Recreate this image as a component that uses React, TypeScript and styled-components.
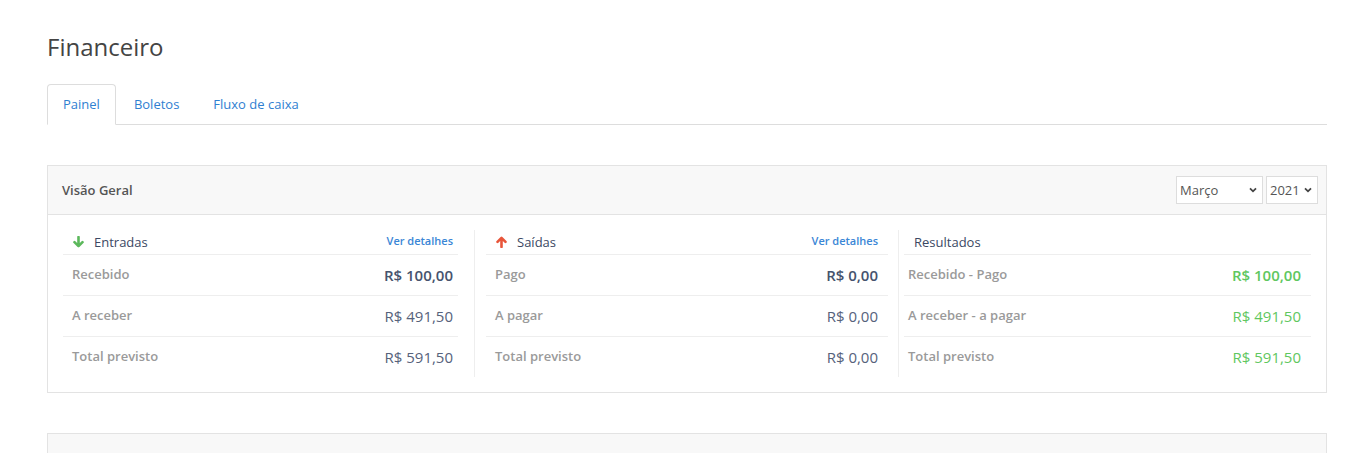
import styled, { createGlobalStyle } from "styled-components";

const GlobalStyle = createGlobalStyle`
  * { box-sizing: border-box; }
  body {
    margin: 0;
    background: #fff;
    font-family: "Open Sans", "Liberation Sans", sans-serif;
    color: #555;
  }
`;

const Page = styled.div`
  padding: 28px 39px 0 47px;
`;

const Title = styled.h1`
  margin: 0 0 18px;
  font-size: 24px;
  font-weight: 400;
  line-height: 38px;
  color: #444;
`;

const Tabs = styled.ul`
  display: flex;
  list-style: none;
  margin: 0 0 40px;
  padding: 0;
  border-bottom: 1px solid #ddd;
`;

const Tab = styled.li<{ active?: boolean }>`
  margin: 0 2px -1px 0;
  padding: 10px 15px;
  font-size: 13px;
  line-height: 19px;
  color: #2f80d1;
  border: 1px solid ${(p) => (p.active ? "#ddd" : "transparent")};
  border-bottom-color: ${(p) => (p.active ? "#fff" : "transparent")};
  border-radius: 4px 4px 0 0;
  background: ${(p) => (p.active ? "#fff" : "transparent")};
`;

const Panel = styled.section`
  border: 1px solid #e3e3e3;
  margin-bottom: 40px;
`;

const PanelHeader = styled.div`
  display: flex;
  align-items: center;
  justify-content: space-between;
  height: 49px;
  padding: 0 8px 0 14px;
  background: #f8f8f8;
  border-bottom: 1px solid #e3e3e3;
`;

const PanelTitle = styled.span`
  font-size: 13px;
  font-weight: 600;
  color: #555;
`;

const Selects = styled.div`
  display: flex;
  gap: 3px;
`;

const SelectBox = styled.div<{ w: number }>`
  position: relative;
  width: ${(p) => p.w}px;
  height: 28px;
`;

const Select = styled.select`
  appearance: none;
  width: 100%;
  height: 100%;
  padding: 0 0 0 3px;
  border: 1px solid #ddd;
  background: #fff;
  font-family: inherit;
  font-size: 13px;
  color: #555;
`;

const Chevron = styled.svg`
  position: absolute;
  right: 6px;
  top: 11px;
  pointer-events: none;
`;

const PanelBody = styled.div`
  display: flex;
  padding: 15px 0;
`;

const ColHeader = styled.div`
  display: flex;
  align-items: center;
  justify-content: space-between;
  height: 25px;
  padding: 0 5px 0 10px;
  border-bottom: 1px solid #eee;
`;

const Row = styled.div`
  display: flex;
  align-items: center;
  justify-content: space-between;
  height: 41px;
  padding: 0 5px 0 9px;
  border-bottom: 1px solid #eee;
  &:last-child { border-bottom: none; height: 40px; }
`;

const Column = styled.div<{ pad: string; divider?: boolean; w?: number; inset?: string; rowStart?: string }>`
  ${(p) => (p.w ? `width: ${p.w}px; flex: none;` : "flex: 1;")}
  padding: ${(p) => p.pad};
  border-left: ${(p) => (p.divider ? "1px solid #eee" : "none")};
  ${(p) =>
    p.inset
      ? `
    & ${ColHeader} { padding-right: ${p.inset}; }
    & ${Row} { padding-right: ${p.inset}; }
  `
      : ""}
  ${(p) => (p.rowStart ? `& ${Row} { padding-left: ${p.rowStart}; }` : "")}
`;

const ColTitle = styled.span`
  display: flex;
  align-items: center;
  gap: 10px;
  font-size: 13px;
  color: #3b4863;
  line-height: 24px;
`;

const Details = styled.a`
  font-size: 11px;
  font-weight: 600;
  color: #3a86d6;
  margin-top: -4px;
  text-decoration: none;
`;

const Label = styled.span`
  font-size: 13px;
  font-weight: 600;
  color: #9a9a9a;
  margin-top: -2px;
`;

const Value = styled.span<{ strong?: boolean; tone?: "green" }>`
  font-size: 15px;
  font-weight: ${(p) => (p.strong ? 600 : 400)};
  color: ${(p) => (p.tone === "green" ? "#5fc760" : p.strong ? "#46536e" : "#56627b")};
`;

const EmptyPanel = styled.div`
  height: 30px;
  border: 1px solid #e3e3e3;
  border-bottom: none;
  background: #f8f8f8;
`;

const Arrow = ({ up, color }: { up?: boolean; color: string }) => (
  <svg width="11" height="12" viewBox="0 0 11 12" style={{ transform: up ? "rotate(180deg)" : undefined }}>
    <path d="M5.5 1v9M1.5 6.2l4 4 4-4" fill="none" stroke={color} strokeWidth="2.6" strokeLinecap="round" strokeLinejoin="round" />
  </svg>
);

const Down = () => (
  <Chevron width="8" height="6" viewBox="0 0 8 6">
    <path d="M1 1.3l3 3 3-3" fill="none" stroke="#444" strokeWidth="1.8" />
  </Chevron>
);

type Item = { label: string; value: string };

const Block = ({ items, green }: { items: Item[]; green?: boolean }) => (
  <>
    {items.map((it, i) => (
      <Row key={it.label}>
        <Label>{it.label}</Label>
        <Value strong={i === 0} tone={green ? "green" : undefined}>{it.value}</Value>
      </Row>
    ))}
  </>
);

export default function App() {
  return (
    <Page>
      <GlobalStyle />
      <Title>Financeiro</Title>
      <Tabs>
        <Tab active>Painel</Tab>
        <Tab>Boletos</Tab>
        <Tab>Fluxo de caixa</Tab>
      </Tabs>
      <Panel>
        <PanelHeader>
          <PanelTitle>Visão Geral</PanelTitle>
          <Selects>
            <SelectBox w={87}>
              <Select defaultValue="3">
                <option value="3">Março</option>
              </Select>
              <Down />
            </SelectBox>
            <SelectBox w={52}>
              <Select defaultValue="2021">
                <option value="2021">2021</option>
              </Select>
              <Down />
            </SelectBox>
          </Selects>
        </PanelHeader>
        <PanelBody>
          <Column w={426} pad="0 16px 0 15px">
            <ColHeader>
              <ColTitle><Arrow color="#5cb85c" />Entradas</ColTitle>
              <Details href="#">Ver detalhes</Details>
            </ColHeader>
            <Block
              items={[
                { label: "Recebido", value: "R$ 100,00" },
                { label: "A receber", value: "R$ 491,50" },
                { label: "Total previsto", value: "R$ 591,50" },
              ]}
            />
          </Column>
          <Column w={424} divider pad="0 10px 0 11px" inset="10px">
            <ColHeader>
              <ColTitle><Arrow up color="#e8553a" />Saídas</ColTitle>
              <Details href="#">Ver detalhes</Details>
            </ColHeader>
            <Block
              items={[
                { label: "Pago", value: "R$ 0,00" },
                { label: "A pagar", value: "R$ 0,00" },
                { label: "Total previsto", value: "R$ 0,00" },
              ]}
            />
          </Column>
          <Column divider pad="0 15px 0 5px" inset="10px" rowStart="4px">
            <ColHeader>
              <ColTitle>Resultados</ColTitle>
            </ColHeader>
            <Block
              green
              items={[
                { label: "Recebido - Pago", value: "R$ 100,00" },
                { label: "A receber - a pagar", value: "R$ 491,50" },
                { label: "Total previsto", value: "R$ 591,50" },
              ]}
            />
          </Column>
        </PanelBody>
      </Panel>
      <EmptyPanel />
    </Page>
  );
}
